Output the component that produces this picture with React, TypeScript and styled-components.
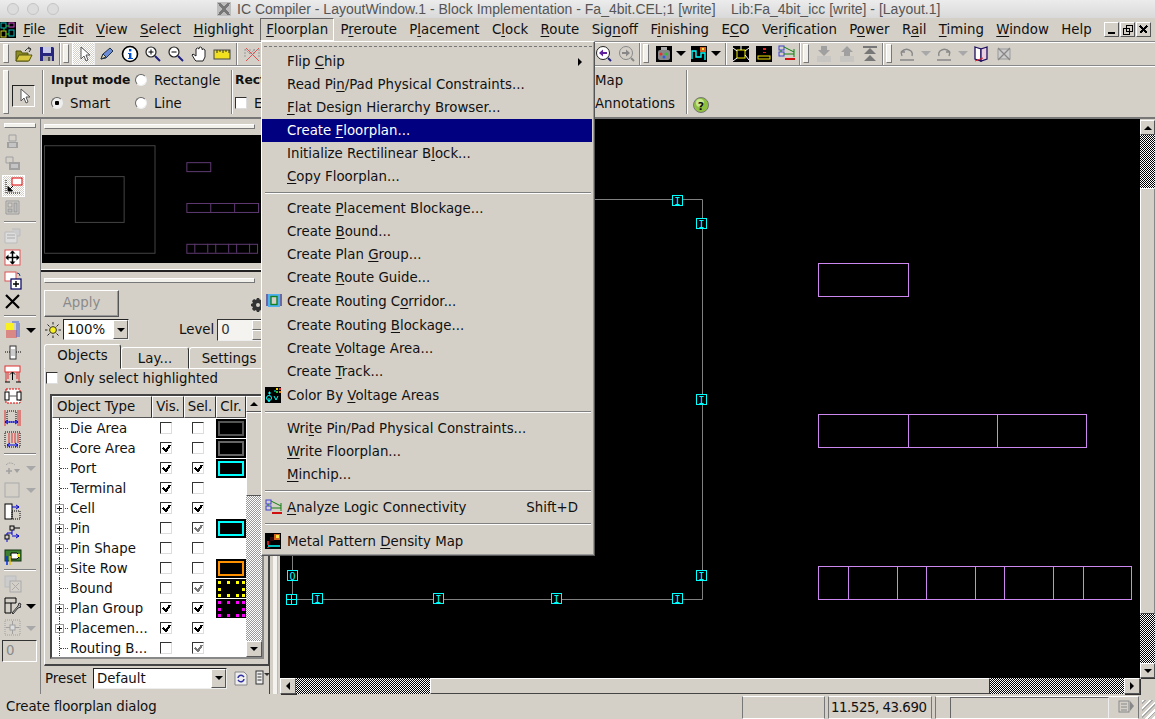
import React from "react";
import styled, { createGlobalStyle, css } from "styled-components";

const FACE = "#d4d0c8";
const raised = css`
  border: 1px solid;
  border-color: #fff #555 #555 #fff;
`;
const sunken = css`
  border: 1px solid;
  border-color: #555 #fff #fff #555;
`;
const dither = css`
  background: repeating-conic-gradient(#000 0 25%, #fff 0 50%) 0 0 / 2px 2px;
`;

const Global = createGlobalStyle`
  html, body { margin: 0; padding: 0; width: 1155px; height: 719px; overflow: hidden; background: ${FACE}; }
  body { font-family: "DejaVu Sans", sans-serif; font-size: 13.33px; color: #111; }
  * { box-sizing: border-box; }
`;

const Shell = styled.div`
  position: relative;
  width: 1155px;
  height: 719px;
  display: flex;
  flex-direction: column;
  overflow: hidden;
`;

/* title bar */
const TitleBar = styled.div`
  height: 18px;
  flex: none;
  display: flex;
  align-items: center;
  background: linear-gradient(#ececec, #d9d9d9);
  padding-left: 7px;
`;
const Light = styled.span`
  width: 12px;
  height: 12px;
  border-radius: 50%;
  border: 1px solid #c4c4c4;
  background: #dcdcdc;
  margin-right: 8px;
`;
const TitleGlyph = styled.span`
  margin: 0 6px 0 150px;
  width: 14px;
  height: 14px;
  display: flex;
  background: #bdbdbd;
`;
const TitleText = styled.span`
  font-family: "Liberation Sans", sans-serif;
  font-size: 14px;
  color: #555;
  white-space: pre;
`;

/* menu bar */
const MenuBar = styled.div`
  height: 23px;
  flex: none;
  display: flex;
  align-items: center;
  background: ${FACE};
`;
const AppLogo = styled.span`
  width: 16px;
  height: 18px;
  margin-right: 1px;
  display: flex;
`;
const MenuEntry = styled.span<{ $open?: boolean }>`
  height: 23px;
  line-height: 21px;
  padding: 0 5.2px;
  white-space: nowrap;
  border: 1px solid transparent;
  ${(p) => p.$open && css`
    border-color: #666 #fff #fff #666;
  `}
`;
const Mn = styled.span`
  text-decoration: underline;
  text-underline-offset: 2px;
`;
const WinButtons = styled.div`
  margin-left: auto;
  margin-right: 4px;
  display: flex;
  gap: 1px;
`;
const WinButton = styled.span`
  ${raised}
  width: 15px;
  height: 15px;
  display: flex;
  align-items: center;
  justify-content: center;
`;

/* tool row */
const ToolRow = styled.div`
  height: 25px;
  flex: none;
  display: flex;
  align-items: center;
  padding-left: 1px;
  border-top: 1px solid #888;
  border-bottom: 1px solid #888;
  box-shadow: inset 0 1px 0 #fff;
`;
const Grip = styled.span<{ $tall?: boolean }>`
  flex: none;
  width: 6px;
  height: ${(p) => (p.$tall ? 44 : 19)}px;
  margin: 0 3px 0 2px;
  border: 1px solid #777;
  border-left-color: #fff;
  border-top-color: #fff;
  background: #f2f0ea;
`;
const ToolSep = styled.span<{ $inner?: boolean }>`
  flex: none;
  width: 2px;
  height: 22px;
  border-left: 1px solid #808080;
  border-right: 1px solid #fff;
  margin: ${(p) => (p.$inner ? "0 2px 0 3px" : "0 0 0 1px")};
`;
const ToolSlot = styled.span<{ $active?: boolean }>`
  flex: none;
  width: 23px;
  height: 23px;
  display: flex;
  align-items: center;
  justify-content: center;
  ${(p) => p.$active && css`
    ${raised}
    border-color: #fff #eee #eee #fff;
    background: repeating-conic-gradient(${FACE} 0 25%, #fff 0 50%) 0 0 / 2px 2px;
  `}
`;
const Caret = styled.span<{ $dim?: boolean; $lead?: number }>`
  flex: none;
  width: 0;
  height: 0;
  margin: 0 1px 0 ${(p) => p.$lead ?? 1}px;
  border-left: 5px solid transparent;
  border-right: 5px solid transparent;
  border-top: 5px solid ${(p) => (p.$dim ? "#a8a8a8" : "#000")};
`;
const Spacer = styled.span<{ $w?: number }>`
  flex: ${(p) => (p.$w ? "none" : "1")};
  ${(p) => p.$w && `width:${p.$w}px;`}
`;

/* mode bar */
const ModeBar = styled.div`
  height: 53px;
  flex: none;
  display: flex;
  align-items: center;
  padding-left: 1px;
  border-bottom: 2px solid #777;
  box-shadow: inset 0 1px 0 #fff;
`;
const ModeBox = styled.span`
  flex: none;
  width: 23px;
  height: 22px;
  margin-top: 8px;
  border: 1px solid;
  border-color: #222 #fff #fff #222;
  display: flex;
  align-items: center;
  justify-content: center;
`;
const ModeSep = styled.span<{ $m?: string }>`
  flex: none;
  width: 2px;
  height: 44px;
  border-left: 1px solid #808080;
  border-right: 1px solid #fff;
  margin: ${(p) => p.$m ?? "0 7px 0 7px"};
`;
const ModeGrid = styled.div`
  display: grid;
  grid-template-columns: 84px 87px;
  grid-auto-rows: 23px;
  align-items: center;
  white-space: nowrap;
`;
const Bold = styled.span`
  font-weight: 700;
  font-size: 12.3px;
`;
const RadioWrap = styled.span`
  display: flex;
  align-items: center;
  gap: 7px;
`;
const Radio = styled.span<{ $on?: boolean }>`
  width: 12px;
  height: 12px;
  border-radius: 50%;
  background: ${(p) => (p.$on ? "radial-gradient(circle, #000 0 2px, #eee 2.5px)" : "#fff")};
  border: 1px solid;
  border-color: #666 #eee #eee #666;
  flex: none;
`;
const RectCol = styled.div`
  display: grid;
  grid-auto-rows: 23px;
  align-items: center;
  margin-left: 0;
`;
const MapCol = styled.div`
  display: grid;
  grid-auto-rows: 23px;
  align-items: center;
  width: 91px;
`;
const HelpWrap = styled.span`
  flex: none;
  display: flex;
  margin-top: 26px;
`;

/* workspace */
const Workspace = styled.div`
  flex: 1;
  min-height: 0;
  display: flex;
`;
const SideBar = styled.div`
  flex: none;
  width: 41px;
  border-right: 1px solid #808080;
  display: flex;
  flex-direction: column;
  padding: 4px 0 0 4px;
`;
const SideGrip = styled.span`
  width: 32px;
  height: 5px;
  border: 1px solid #777;
  border-left-color: #fff;
  border-top-color: #fff;
  background: #f2f0ea;
  margin-bottom: 3px;
`;
const SideSlot = styled.span<{ $active?: boolean }>`
  height: 22px;
  display: flex;
  align-items: center;
  gap: 3px;
  ${(p) => p.$active && css`
    width: 23px;
    margin-left: -2px;
    padding-left: 2px;
    border: 1px solid #fff;
    background: repeating-conic-gradient(${FACE} 0 25%, #fff 0 50%) 0 0 / 2px 2px;
  `}
`;
const SideSep = styled.span`
  height: 6px;
  width: 32px;
  display: flex;
  align-items: center;
  &::before {
    content: "";
    width: 100%;
    border-top: 1px solid #808080;
    border-bottom: 1px solid #fff;
  }
`;
const SideField = styled.span`
  ${sunken}
  border-color: #333 #fff #fff #333;
  width: 35px;
  height: 22px;
  margin: 1px 0 0 -2px;
  padding-left: 3px;
  color: #8a8a8a;
  line-height: 20px;
`;

/* left panel */
const Panel = styled.div`
  flex: none;
  width: 229px;
  display: flex;
  flex-direction: column;
  padding-top: 5px;
  border-right: 1px solid #444;
  overflow: hidden;
`;
const PanelGrip = styled.span<{ $top?: number }>`
  flex: none;
  height: 5px;
  width: 211px;
  margin: ${(p) => p.$top ?? 0}px 0 0 3px;
  border: 1px solid #777;
  border-left-color: #fff;
  border-top-color: #fff;
  background: #f2f0ea;
`;
const MiniMap = styled.div`
  flex: none;
  height: 128px;
  margin: 6px 0 0 1px;
  background: #000;
  display: flex;
`;
const PanelDivider = styled.span`
  flex: none;
  height: 3px;
  margin-top: 6px;
  border-top: 1px solid #fff;
  border-bottom: 2px solid #222;
`;
const ApplyRow = styled.div`
  flex: none;
  height: 27px;
  margin: 7px 0 0 3px;
  display: flex;
  align-items: flex-start;
  justify-content: space-between;
`;
const ApplyButton = styled.span`
  ${raised}
  width: 75px;
  height: 27px;
  text-align: center;
  line-height: 24px;
  color: #8a8a8a;
  box-shadow: inset -1px -1px 0 #999;
`;
const GearWrap = styled.span`
  display: flex;
  margin: 7px 3px 0 0;
`;
const OptionRow = styled.div`
  flex: none;
  height: 23px;
  margin: 1px 0 0 4px;
  display: flex;
  align-items: center;
`;
const ComboBox = styled.span<{ $w: number }>`
  flex: none;
  width: ${(p) => p.$w}px;
  height: 21px;
  display: flex;
  align-items: center;
  justify-content: space-between;
  background: #fff;
  border: 1px solid;
  border-color: #222 #eee #eee #222;
  padding-left: 3px;
  margin-left: 2px;
`;
const ComboArrow = styled.span`
  ${raised}
  width: 15px;
  height: 19px;
  background: ${FACE};
  display: flex;
  align-items: center;
  justify-content: center;
`;
const SmallCaret = styled.span<{ $dir?: "up" | "down" | "left" | "right" }>`
  display: block;
  width: 0;
  height: 0;
  ${(p) => {
    switch (p.$dir) {
      case "up":
        return "border-left:4px solid transparent;border-right:4px solid transparent;border-bottom:4px solid #000;";
      case "left":
        return "border-top:4px solid transparent;border-bottom:4px solid transparent;border-right:4px solid #000;";
      case "right":
        return "border-top:4px solid transparent;border-bottom:4px solid transparent;border-left:4px solid #000;";
      default:
        return "border-left:4px solid transparent;border-right:4px solid transparent;border-top:4px solid #000;";
    }
  }}
`;
const LevelLabel = styled.span`
  margin: 0 3px 0 50px;
`;
const SpinField = styled.span`
  flex: none;
  width: 47px;
  height: 22px;
  background: #f4f3ef;
  border: 1px solid;
  border-color: #333 #eee #eee #333;
  padding-left: 3px;
  line-height: 20px;
  color: #333;
  display: flex;
  justify-content: space-between;
`;
const SpinButtons = styled.span`
  width: 11px;
  display: flex;
  flex-direction: column;
  margin-right: 0;
  &::before,
  &::after {
    content: "";
    flex: 1;
    background: ${FACE};
    border: 1px solid;
    border-color: #fff #666 #666 #fff;
  }
`;
const TabRow = styled.div`
  flex: none;
  height: 25px;
  margin: 3px 0 0 3px;
  display: flex;
  align-items: flex-end;
`;
const Tab = styled.span<{ $active?: boolean; $w: number }>`
  flex: none;
  width: ${(p) => p.$w}px;
  height: ${(p) => (p.$active ? 25 : 22)}px;
  border: 1px solid;
  border-color: #fff #333 transparent #fff;
  border-radius: 3px 3px 0 0;
  text-align: center;
  line-height: ${(p) => (p.$active ? 22 : 21)}px;
  ${(p) => !p.$active && "border-bottom-color:#fff;"}
`;
const TabPane = styled.div`
  flex: none;
  height: 297px;
  width: 226px;
  margin-left: 3px;
  border-right: 2px solid #444;
  border-bottom: 2px solid #444;
  border-left: 1px solid #fff;
  display: flex;
  flex-direction: column;
`;
const OnlyRow = styled.label`
  flex: none;
  height: 18px;
  display: flex;
  align-items: center;
  gap: 6px;
  padding-left: 1px;
`;
const CheckBox = styled.span`
  flex: none;
  width: 12px;
  height: 12px;
  background: #fff;
  border: 1px solid;
  border-color: #333 #ddd #ddd #333;
  display: flex;
  align-items: center;
  justify-content: center;
`;
const TableFrame = styled.div`
  flex: none;
  margin: 7px 0 0 5px;
  width: 214px;
  height: 265px;
  border: 2px solid;
  border-color: #444 #888 #888 #444;
  display: flex;
  overflow: hidden;
`;
const TableMain = styled.div`
  flex: 1;
  min-width: 0;
  background: #fff;
`;
const HeadRow = styled.div`
  height: 22px;
  display: grid;
  grid-template-columns: 100px 32px 32px 30px;
  background: ${FACE};
`;
const HeadCell = styled.span<{ $center?: boolean }>`
  ${raised}
  border-right-color: #333;
  line-height: 20px;
  padding-left: ${(p) => (p.$center ? 0 : 4)}px;
  text-align: ${(p) => (p.$center ? "center" : "left")};
  overflow: hidden;
  white-space: nowrap;
`;
const DataRow = styled.div`
  height: 20px;
  display: grid;
  grid-template-columns: 100px 32px 32px 30px;
  align-items: center;
`;
const NameCell = styled.span`
  height: 20px;
  display: flex;
  align-items: center;
  white-space: nowrap;
`;
const Branch = styled.span`
  position: relative;
  flex: none;
  width: 18px;
  height: 20px;
  &::before {
    content: "";
    position: absolute;
    left: 7px;
    top: 0;
    bottom: 0;
    border-left: 1px dotted #444;
  }
  &::after {
    content: "";
    position: absolute;
    left: 8px;
    top: 10px;
    width: 8px;
    border-top: 1px dotted #444;
  }
`;
const PlusBox = styled.span`
  position: absolute;
  z-index: 1;
  left: 3px;
  top: 6px;
  width: 9px;
  height: 9px;
  border: 1px solid #999;
  background: linear-gradient(#111, #111) center / 5px 1px no-repeat,
    linear-gradient(#111, #111) center / 1px 5px no-repeat, #fff;
`;
const BoxCell = styled.span`
  display: flex;
  justify-content: center;
  padding-right: 4px;
`;
const Swatch = styled.span<{ $c?: string }>`
  height: 19px;
  width: 30px;
  background: #000;
  border: 1px solid #000;
  ${(p) => p.$c && `box-shadow: inset 0 0 0 1px #000, inset 0 0 0 3px ${p.$c}, inset 0 0 0 20px #000;`}
  display: flex;
`;
const ThinScroll = styled.div`
  flex: none;
  width: 16px;
  display: flex;
  flex-direction: column;
  background: ${FACE};
`;
const ScrollBtn = styled.span<{ $s?: number }>`
  ${raised}
  flex: none;
  width: ${(p) => p.$s ?? 16}px;
  height: ${(p) => p.$s ?? 16}px;
  box-shadow: 1px 1px 0 #333;
  background: ${FACE};
  display: flex;
  align-items: center;
  justify-content: center;
`;
const Thumb = styled.span<{ $len?: number }>`
  ${raised}
  flex: ${(p) => (p.$len ? `none` : "1")};
  ${(p) => p.$len && `height:${p.$len}px;`}
  background: ${FACE};
`;
const DitherFill = styled.span`
  flex: 1;
  background: repeating-conic-gradient(#999 0 25%, #fff 0 50%) 0 0 / 2px 2px;
`;
const PresetRow = styled.div`
  flex: none;
  height: 22px;
  margin: 1px 0 0 4px;
  display: flex;
  align-items: center;
`;
const PresetLabel = styled.span`
  width: 46px;
  flex: none;
`;
const PresetIcons = styled.span`
  display: flex;
  align-items: center;
  gap: 6px;
  margin-left: 6px;
`;

/* sash */
const Sash = styled.div`
  flex: none;
  width: 10px;
  display: flex;
  justify-content: center;
  &::before {
    content: "";
    width: 4px;
    background: #f4f3ef;
    border-right: 1px solid #bbb;
  }
`;

/* canvas */
const CanvasGrid = styled.div`
  flex: 1;
  min-width: 0;
  display: grid;
  grid-template-columns: 1fr 15px;
  grid-template-rows: 1fr 16px;
`;
const CanvasArea = styled.div`
  background: #000;
  min-height: 0;
  overflow: hidden;
  display: flex;
`;
const VScroll = styled.div`
  display: flex;
  flex-direction: column;
  padding-top: 1px;
`;
const VDither = styled.span<{ $len: number }>`
  flex: none;
  height: ${(p) => p.$len}px;
  ${dither}
`;
const VThumb = styled.span`
  ${raised}
  flex: 1;
  background: ${FACE};
  border-right-color: #888;
  border-bottom-color: #444;
`;
const HScroll = styled.div`
  display: flex;
`;
const HDither = styled.span`
  flex: none;
  width: 134px;
  ${dither}
`;
const HThumb = styled.span`
  ${raised}
  flex: 1;
  background: ${FACE};
  border-bottom-color: #444;
  border-right-color: #333;
`;

/* status bar */
const StatusBar = styled.div`
  height: 25px;
  flex: none;
  display: flex;
  align-items: center;
  position: relative;
`;
const StatusText = styled.span`
  padding-left: 6px;
  width: 742px;
  flex: none;
  letter-spacing: -0.08px;
`;
const StatusCell = styled.span<{ $w: number }>`
  flex: none;
  width: ${(p) => p.$w}px;
  height: 23px;
  margin-right: 3px;
  margin-top: 2px;
  padding-left: 2px;
  line-height: 21px;
  white-space: nowrap;
  letter-spacing: -0.45px;
  border: 1px solid;
  border-color: #fff #777 #fff #777;
  display: flex;
  align-items: center;
`;
const StatusInner = styled.span`
  flex: 1;
  height: 21px;
  margin-left: 12px;
  border-left: 1px solid #666;
  border-top: 1px solid #666;
  border-right: 1px solid #eee;
`;
const StatusIconWrap = styled.span`
  display: flex;
  padding: 0 2px 0 9px;
`;
const ResizeGrip = styled.span`
  margin-left: auto;
  width: 15px;
  height: 19px;
  align-self: flex-end;
  background: repeating-linear-gradient(135deg, #fff 0 2px, #aaa 2px 3px, ${FACE} 3px 5px);
`;

/* popup */
const Popup = styled.div`
  position: absolute;
  z-index: 5;
  left: 261px;
  top: 41px;
  width: 334px;
  height: 515px;
  background: ${FACE};
  border: 1px solid;
  border-color: #fff #555 #555 #fff;
  box-shadow: inset -1px -1px 0 #999;
  display: flex;
  flex-direction: column;
`;
const TearOff = styled.div`
  flex: none;
  height: 8px;
  margin: 0 2px;
  display: flex;
  align-items: center;
  &::before {
    content: "";
    width: 100%;
    border-top: 1px dashed #777;
  }
`;
const PopItem = styled.div<{ $sel?: boolean; $tall?: boolean }>`
  flex: none;
  height: ${(p) => (p.$tall ? 24 : 23)}px;
  margin-right: 2px;
  display: flex;
  align-items: center;
  white-space: nowrap;
  ${(p) => p.$sel && `background:#000080;color:#fff;`}
`;
const PopIcon = styled.span`
  flex: none;
  width: 25px;
  padding-left: 3px;
  display: flex;
  align-items: center;
`;
const PopShort = styled.span`
  margin-left: auto;
  margin-right: 14px;
`;
const PopArrow = styled.span`
  margin-left: auto;
  margin-right: 10px;
  display: flex;
`;
const PopSep = styled.div<{ $h?: number }>`
  flex: none;
  height: ${(p) => p.$h ?? 9}px;
  margin: 0 3px;
  display: flex;
  align-items: center;
  &::before {
    content: "";
    width: 100%;
    border-top: 1px solid #808080;
    border-bottom: 1px solid #fff;
  }
`;
const Glyph = styled.svg`
  display: block;
  flex: none;
`;
const PixelGlyph = styled.svg`
  display: block;
  flex: none;
  shape-rendering: crispEdges;
`;

const Label = ({ t }: { t: string }) => {
  const i = t.indexOf("_");
  if (i < 0) return <span>{t}</span>;
  return (
    <span>
      {t.slice(0, i)}
      <Mn>{t[i + 1]}</Mn>
      {t.slice(i + 2)}
    </span>
  );
};

const D = "#a0a0a0";
const ICONS: Record<string, React.ReactNode> = {
  open: (
    <>
      <path d="M1 16V6h5l1 2h6v8z" fill="#8a8a20" stroke="#555510" />
      <path d="M1 16l3-6h13l-3 6z" fill="#d8c840" stroke="#555510" />
      <path d="M10 6q2-4 6-2M16 4l-3-2M16 4l-2 3" stroke="#333" fill="none" />
    </>
  ),
  save: (
    <>
      <path d="M2 2h13l1 1v13H2z" fill="#26267e" />
      <rect x="5" y="2" width="8" height="6" fill="#c8c8e8" />
      <rect x="5" y="11" width="9" height="5" fill="#aaa" />
      <rect x="10" y="12" width="2" height="4" fill="#555" />
    </>
  ),
  arrow: <path d="M6 2v12l3-3 2 5 2-1-2-5h4z" fill="#fff" stroke="#555" />,
  pencil: (
    <>
      <path d="M3 14l2-5 7-6 3 3-7 7z" fill="#6c8cd8" stroke="#234" />
      <path d="M3 14l2-5 3 3z" fill="#e8d8b0" stroke="#234" />
    </>
  ),
  info: (
    <>
      <circle cx="9" cy="9" r="7.5" fill="#fff" stroke="#000" strokeWidth="1.6" />
      <rect x="8" y="4" width="2.4" height="2.4" fill="#0050d0" />
      <path d="M7 8h3.4v5H12v1H7v-1h1V9H7z" fill="#0050d0" />
    </>
  ),
  zoomin: (
    <>
      <circle cx="7" cy="7" r="5" fill="#fff" stroke="#222" strokeWidth="1.2" />
      <path d="M4.5 7h5M7 4.5v5" stroke="#000" />
      <path d="M11 11l5 5" stroke="#202080" strokeWidth="2" />
    </>
  ),
  zoomout: (
    <>
      <circle cx="7" cy="7" r="5" fill="#fff" stroke="#222" strokeWidth="1.2" />
      <path d="M4.5 7h5" stroke="#000" />
      <path d="M11 11l5 5" stroke="#202080" strokeWidth="2" />
    </>
  ),
  hand: (
    <path
      d="M5 15L2 10l1-1 3 2V4l1.500-1L9 4V2.500L10.500 2 12 3v1.500L13.500 4 15 5v7l-2 4H6z"
      fill="#fff"
      stroke="#222"
    />
  ),
  ruler: (
    <>
      <rect x="1" y="5" width="16" height="9" fill="#f0e020" stroke="#444" />
      <path d="M4 5v3M7 5v2M10 5v3M13 5v2M16 5v3" stroke="#333" />
    </>
  ),
  crossed: (
    <>
      <path d="M2 4v9M16 4v9M2 4l5 5 5-5M7 4v5M11 4v5" stroke="#999" fill="none" strokeDasharray="2 1" />
      <path d="M3 3l13 13M16 3L3 16" stroke="#e05050" />
    </>
  ),
  zoomback: (
    <>
      <circle cx="8" cy="8" r="6.500" fill="#fff" stroke="#222" />
      <path d="M4 8l4-3.500V7h4v2H8v2.500z" fill="#6020a0" />
      <path d="M13 13l3 3" stroke="#202080" strokeWidth="2" />
    </>
  ),
  zoomfwd: (
    <>
      <circle cx="8" cy="8" r="6.500" fill={FACE} stroke="#888" />
      <path d="M12 8L8 4.500V7H4v2h4v2.500z" fill="#888" />
      <path d="M13 13l3 3" stroke="#888" strokeWidth="2" />
    </>
  ),
  camera: (
    <>
      <rect x="1" y="1" width="16" height="16" fill="#000" />
      <rect x="3" y="5" width="12" height="10" rx="2" fill="#888" />
      <rect x="6" y="2" width="6" height="3" fill="#aaa" />
      <circle cx="6" cy="9" r="1.500" fill="#e03030" />
      <circle cx="11" cy="9" r="1.500" fill="#30c030" />
      <circle cx="9" cy="12" r="1.500" fill="#3060e0" />
    </>
  ),
  routemap: (
    <>
      <rect x="1" y="1" width="16" height="16" fill="#000" />
      <path d="M2 14V6h4v6h5v-4h4v7" stroke="#00ffff" fill="none" strokeWidth="1.4" />
      <rect x="10" y="2" width="6" height="5" fill="#d06020" />
      <rect x="12" y="3" width="2" height="2" fill="#ffe040" />
    </>
  ),
  yellownet: (
    <>
      <rect x="1" y="1" width="16" height="16" fill="#000" />
      <rect x="5" y="5" width="8" height="8" fill="none" stroke="#f0f000" />
      <path d="M1 3l4 3M17 3l-4 3M1 16l4-3M13 10l4 5M9 1v4" stroke="#fff" />
    </>
  ),
  redbox: (
    <>
      <rect x="1" y="1" width="16" height="16" fill="#000" />
      <path d="M8 3h3v2H8zM8 7h3v1H8z" fill="#e02020" />
      <rect x="3" y="11" width="12" height="3" fill="none" stroke="#f0e000" />
    </>
  ),
  logic: (
    <>
      <rect x="1" y="1" width="5" height="4" fill={FACE} stroke="#4040d0" />
      <rect x="1" y="7" width="5" height="4" fill={FACE} stroke="#4040d0" />
      <path d="M6 2l10 5M6 9h10M16 4v8M3 5v2" stroke="#108010" fill="none" />
      <rect x="7" y="13" width="10" height="2" fill="#d01010" />
    </>
  ),
  down: (
    <>
      <path d="M6 1h6v4h3l-6 6-6-6h3z" fill={D} />
      <path d="M2 12h14M2 14h14M2 16h14" stroke="#bbb" />
    </>
  ),
  up: (
    <>
      <path d="M9 1l6 6h-3v4H6V7H3z" fill={D} />
      <path d="M2 12h14M2 14h14M2 16h14" stroke="#bbb" />
    </>
  ),
  top: (
    <>
      <path d="M2 1h14v2H2z" fill="#777" />
      <path d="M9 3l6 6H3z" fill="#777" />
      <path d="M3 9h12l-6 0zM3 16l6-6 6 6z" fill="#777" />
    </>
  ),
  undo: <path d="M3 7q5-5 10-1 2 2 1 5M3 7l1 4M3 7l4 0M2 15h14" stroke="#888" fill="none" strokeWidth="1.300" />,
  redo: <path d="M15 7q-5-5-10-1-2 2-1 5M15 7l-1 4M15 7l-4 0M2 15h14" stroke="#888" fill="none" strokeWidth="1.300" />,
  book: (
    <>
      <path d="M3 2l6 2v12l-6-2z" fill="#fff" stroke="#201060" strokeWidth="1.300" />
      <path d="M15 2l-6 2v12l6-2z" fill="#e8d0e0" stroke="#201060" strokeWidth="1.300" />
      <path d="M3 16l8-3" stroke="#e02020" />
    </>
  ),
  crossbook: (
    <>
      <path d="M3 4h12v10H3z" fill="#ccc" stroke="#999" />
      <path d="M3 3l12 12M15 3L3 15" stroke="#888" strokeWidth="1.400" />
    </>
  ),
  printer: (
    <>
      <path d="M5 2h7v6H5z" fill="none" stroke={D} />
      <path d="M3 9h11v6H3z" fill={D} />
      <path d="M5 11h7M5 13h7" stroke="#e8e8e8" />
    </>
  ),
  copyp: (
    <>
      <path d="M2 2h7v6H2z" fill="none" stroke={D} />
      <path d="M5 7h11v8H5z" fill={D} />
      <path d="M7 10h7M7 12h7" stroke="#e8e8e8" />
    </>
  ),
  place: (
    <>
      <rect x="7" y="1" width="10" height="7" fill="#fff" stroke="#e00000" />
      <path d="M1 3v13h15" stroke="#000" strokeDasharray="1 1" fill="none" />
      <path d="M3 14l5-5M3 9.500V14h4.500z" stroke="#000" fill="#000" />
    </>
  ),
  grid: (
    <>
      <path d="M2 2h13v13H2z" fill="none" stroke="#999" />
      <rect x="4" y="4" width="4" height="4" fill="none" stroke="#999" />
      <rect x="4" y="10" width="4" height="3" fill="#bbb" stroke="#999" />
      <rect x="10" y="4" width="3" height="9" fill="#bbb" stroke="#999" />
    </>
  ),
  docs: (
    <>
      <path d="M1 5h12v11H1z" fill="#ddd" stroke="#bbb" />
      <path d="M8 2h8v7h-3" fill="#ccc" stroke="#bbb" />
      <path d="M3 8h8M3 11h8" stroke="#aaa" />
    </>
  ),
  move: (
    <>
      <rect x="1" y="1" width="15" height="15" fill="#fff" stroke="#e05050" />
      <path d="M8.500 2v13M2 8.500h13" stroke="#000" strokeWidth="1.500" />
      <path d="M8.500 1.500l3 3h-6zM8.500 15.500l3-3h-6zM1.500 8.500l3-3v6zM15.500 8.500l-3-3v6z" fill="#000" />
    </>
  ),
  copyadd: (
    <>
      <rect x="1" y="1" width="11" height="9" fill="#fff" stroke="#e05050" />
      <rect x="7" y="8" width="10" height="10" fill="#fff" stroke="#000060" strokeWidth="1.200" />
      <path d="M12 10v6M9 13h6" stroke="#000" strokeWidth="1.400" />
      <path d="M13 2q3 0 3 3" stroke="#204080" fill="none" />
    </>
  ),
  cross: <path d="M2 2l13 13M15 2L2 15" stroke="#000" strokeWidth="2.200" />,
  layers: (
    <>
      <path d="M2 10h11M2 12h11M2 14h11M2 16h11" stroke="#e04040" />
      <path d="M13 2v14M15 2v14" stroke="#4060d0" />
      <rect x="2" y="2" width="8" height="7" fill="#f8f020" />
      <path d="M15 1H8" stroke="#4060d0" />
    </>
  ),
  slider: (
    <>
      <path d="M1 9h5M12 9h5" stroke="#000" strokeDasharray="1 1" />
      <rect x="6" y="3" width="6" height="13" fill="#fff" stroke="#333" />
      <rect x="7" y="6" width="4" height="7" fill="#ccc" />
    </>
  ),
  pull: (
    <>
      <rect x="1" y="1" width="15" height="6" fill="#fff" stroke="#e03030" />
      <path d="M2 7v10M15 7v10M4 7v7M13 7v7" stroke="#e03030" />
      <path d="M1 17h5M12 17h5" stroke="#000" />
      <path d="M8.500 15V7M6 9.500L8.500 7 11 9.500" stroke="#000" fill="none" />
    </>
  ),
  stretch: (
    <>
      <rect x="2" y="2" width="14" height="14" fill="#fff" stroke="#e00000" strokeDasharray="2 1" />
      <rect x="1" y="5" width="4" height="8" fill="#fff" stroke="#000" />
      <rect x="13" y="5" width="4" height="8" fill="#fff" stroke="#000" />
      <path d="M5 9h8" stroke="#555" />
    </>
  ),
  rows: (
    <>
      <rect x="3" y="2" width="9" height="11" fill="none" stroke="#000" strokeDasharray="1 1" />
      <path d="M1 1v16M14 1v16M16 1v16" stroke="#e03030" />
      <path d="M1 13h13M1 13l3-2M1 13l3 2M14 13l-3-2M14 13l-3 2" stroke="#0000e0" fill="none" />
    </>
  ),
  rows2: (
    <>
      <rect x="1" y="1" width="15" height="15" fill="none" stroke="#000" strokeDasharray="1 1" />
      <path d="M5 2v10M8 2v10M11 2v10M14 2v10" stroke="#e03030" />
      <path d="M3 14h11M3 14l3-2M3 14l3 2M14 14l-3-2M14 14l-3 2" stroke="#0000e0" fill="none" />
    </>
  ),
  dimshape: (
    <>
      <path d="M2 6q4-4 9 0" stroke={D} fill="none" strokeDasharray="2 1" />
      <path d="M2 12h6M5 9v6" stroke={D} strokeWidth="1.500" />
      <path d="M10 10h6l-3 4z" fill={D} />
    </>
  ),
  dimbox: <rect x="1" y="2" width="14" height="14" fill={FACE} stroke="#aaa" />,
  boxdash: (
    <>
      <rect x="1" y="1" width="7" height="15" fill="#fff" stroke="#000" />
      <rect x="8" y="8" width="8" height="8" fill="none" stroke="#000" strokeDasharray="1 1" />
      <path d="M8 4h7M12 2l3 2-3 2M15 10" stroke="#0000d0" fill="none" />
    </>
  ),
  tree: (
    <>
      <rect x="6" y="1" width="4" height="4" fill="none" stroke="#000" />
      <path d="M10 3h6" stroke="#000" />
      <rect x="1" y="10" width="4" height="4" fill="none" stroke="#000" />
      <path d="M8 5v5M3 10V8h5M8 11h7M12 9l3 2-3 2M3 14v3" stroke="#0000d0" fill="none" />
    </>
  ),
  tagged: (
    <>
      <rect x="1" y="3" width="16" height="11" fill="#3c8030" stroke="#103010" />
      <path d="M7 6h6l3 3-3 3H7z" fill="#fff" stroke="#000" />
      <rect x="13" y="7" width="3" height="3" fill="#f0f000" />
      <path d="M3 9v9" stroke="#0030e0" strokeWidth="1.500" />
      <path d="M6 9v9" stroke="#e0c020" strokeWidth="1.500" />
    </>
  ),
  dimcopy: (
    <>
      <rect x="1" y="1" width="11" height="11" fill="#ccc" stroke="#bbb" />
      <rect x="6" y="6" width="11" height="11" fill={FACE} stroke="#aaa" />
      <path d="M8 8l7 7M15 8l-7 7" stroke="#aaa" />
    </>
  ),
  wrench: (
    <>
      <path d="M1 1h11v5H7v10H1z" fill="none" stroke="#000" />
      <path d="M1 6h6" stroke="#000" />
      <path d="M8 16l6-7 1-3 2 1-1 2 1 1-3 1-5 6z" fill="#bbb" stroke="#333" />
    </>
  ),
  dimnode: (
    <>
      <rect x="1" y="1" width="15" height="15" fill="none" stroke={D} strokeDasharray="1 1" />
      <rect x="6" y="6" width="5" height="5" fill="#ddd" stroke={D} />
      <path d="M8.500 2v4M8.500 11v4M2 8.500h4M11 8.500h4" stroke={D} />
    </>
  ),
  corridor: (
    <>
      <rect x="3" y="1" width="12" height="13" fill="#50b0f0" />
      <rect x="6" y="3.500" width="6" height="8" fill={FACE} stroke="#108020" strokeWidth="1.400" />
      <path d="M1 2h2M1 4h2M1 6h2M1 8h2M1 10h2M1 12h2" stroke="#000080" />
      <path d="M15 2h2M15 4h2M15 6h2M15 8h2M15 10h2M15 12h2" stroke="#000080" />
    </>
  ),
  voltage: (
    <>
      <rect x="0" y="0" width="16" height="16" fill="#000" />
      <path d="M3 6h3M4.500 4.500v3M9 4h2M3 14h2M4 11v4" stroke="#00ffff" />
      <circle cx="4" cy="11" r="2.500" fill="none" stroke="#00ffff" />
      <path d="M9 9l2 4 2-4" stroke="#00ffff" fill="none" />
      <rect x="11" y="1" width="2" height="2" fill="#f0d000" />
      <rect x="14" y="1" width="2" height="2" fill="#e03030" />
      <rect x="11" y="4" width="2" height="2" fill="#30c030" />
      <rect x="14" y="4" width="2" height="2" fill="#e08020" />
    </>
  ),
  density: (
    <>
      <rect x="0" y="0" width="16" height="16" fill="#000" />
      <rect x="9" y="1" width="6" height="6" fill="#d06020" />
      <rect x="11" y="2" width="3" height="3" fill="#ffe040" />
      <path d="M3 13h12" stroke="#00ffff" strokeWidth="1.500" />
      <path d="M3 8v4M3 14v1" stroke="#f02020" strokeWidth="1.600" />
      <path d="M5 5h4M5 7h4" stroke="#601010" />
    </>
  ),
  sun: (
    <>
      <circle cx="8" cy="8" r="3.400" fill="#f8f020" stroke="#333" />
      <path d="M8 0v2.500M8 13.500V16M0 8h2.500M13.500 8H16M2.500 2.500l2 2M11.500 11.500l2 2M2.500 13.500l2-2M11.500 4.500l2-2" stroke="#222" />
    </>
  ),
  gear: (
    <path
      d="M7 1h2l1 2 2-1 2 2-1 2 2 1v2l-2 1 1 2-2 2-2-1-1 2H7l-1-2-2 1-2-2 1-2-2-1V7l2-1-1-2 2-2 2 1zM8 6a2 2 0 100 4 2 2 0 000-4z"
      fill="#333"
      fillRule="evenodd"
    />
  ),
  refresh: (
    <>
      <path d="M2 2h9l3 3v10H2z" fill="#eee" stroke="#888" />
      <path d="M5 8a3 3 0 015-2l1 1M11 9a3 3 0 01-5 2l-1-1" stroke="#3030a0" fill="none" strokeWidth="1.500" />
    </>
  ),
  listdrop: (
    <>
      <rect x="1" y="1" width="7" height="13" fill="#eee" stroke="#333" />
      <path d="M2.500 4h4M2.500 7h4M2.500 10h4" stroke="#333" />
      <path d="M9 3h6l-3 3z" fill="#333" />
    </>
  ),
  listdim: (
    <>
      <rect x="1" y="2" width="10" height="11" fill={FACE} stroke="#888" />
      <path d="M3 5h6M3 8h6M3 11h6" stroke="#888" />
      <path d="M12 2l4 5-4 5z" fill="#888" />
    </>
  ),
  help: (
    <>
      <circle cx="8" cy="8" r="7.500" fill="#90c040" stroke="#777" />
      <circle cx="7" cy="6" r="4" fill="#c8e890" />
    </>
  ),
  logo: (
    <>
      <rect x="0" y="1" width="16" height="16" fill="#000" />
      <rect x="1" y="2" width="5" height="5" fill="none" stroke="#00c0c0" />
      <rect x="9" y="2" width="5" height="4" fill="none" stroke="#d040d0" />
      <rect x="1" y="10" width="5" height="6" fill="none" stroke="#d0d020" />
      <rect x="9" y="9" width="5" height="6" fill="none" stroke="#00c0c0" />
      <path d="M6 5h3M4 7v3M6 13h3" stroke="#30c030" />
    </>
  ),
};

const Icon = ({ n, s = 18 }: { n: string; s?: number }) => (
  <Glyph width={s} height={s} viewBox={`0 0 ${s} ${s}`} overflow="visible">
    {ICONS[n]}
  </Glyph>
);

const Check = ({ dim }: { dim?: boolean }) => (
  <PixelGlyph width="9" height="9" viewBox="0 0 9 9">
    <path d="M1 4l3 3 4-6" stroke={dim ? "#777" : "#000"} strokeWidth="2" fill="none" />
  </PixelGlyph>
);

const Dots = ({ color }: { color: string }) => (
  <PixelGlyph width="28" height="17" viewBox="0 0 28 17">
    {[2, 11, 20, 26].map((x) => (
      <rect key={`t${x}`} x={x - 1} y="1" width="3" height="3" fill={color} />
    ))}
    {[2, 11, 20, 26].map((x) => (
      <rect key={`b${x}`} x={x - 1} y="14" width="3" height="3" fill={color} />
    ))}
    <rect x="1" y="8" width="3" height="3" fill={color} />
    <rect x="25" y="8" width="3" height="3" fill={color} />
  </PixelGlyph>
);

const MENUS = [
  "_File", "_Edit", "_View", "_Select", "_Highlight", "_Floorplan", "P_reroute", "P_lacement", "C_lock",
  "_Route", "Sig_noff", "F_inishing", "E_CO", "Ver_ification", "P_ower", "R_ail", "_Timing", "_Window", "Help",
];

type ObjRow = {
  name: string; plus?: boolean; vis?: number; sel?: number; sw?: string; dots?: string;
};
const ROWS: ObjRow[] = [
  { name: "Die Area", sw: "#555" },
  { name: "Core Area", vis: 1, sw: "#666" },
  { name: "Port", vis: 1, sel: 1, sw: "#00ffff" },
  { name: "Terminal", vis: 1 },
  { name: "Cell", plus: true, vis: 1, sel: 1 },
  { name: "Pin", plus: true, sel: 2, sw: "#00ffff" },
  { name: "Pin Shape", plus: true },
  { name: "Site Row", plus: true, sw: "#ff9000" },
  { name: "Bound", sel: 2, dots: "#ffff00" },
  { name: "Plan Group", plus: true, vis: 1, sel: 1, dots: "#ff00ff" },
  { name: "Placemen...", plus: true, vis: 1, sel: 1 },
  { name: "Routing B...", sel: 2 },
];

type Entry =
  | { sep: true; h?: number }
  | { t: string; sel?: boolean; tall?: boolean; icon?: string; short?: string; arrow?: boolean };
const POPUP: Entry[] = [
  { t: "Flip _Chip", arrow: true },
  { t: "Read Pi_n/Pad Physical Constraints..." },
  { t: "_Flat Design Hierarchy Browser..." },
  { t: "Create _Floorplan...", sel: true },
  { t: "Initialize Rectilinear B_lock..." },
  { t: "_Copy Floorplan..." },
  { sep: true },
  { t: "Create _Placement Blockage..." },
  { t: "Create _Bound..." },
  { t: "Create Plan _Group..." },
  { t: "Create _Route Guide..." },
  { t: "Create Routing C_orridor...", tall: true, icon: "corridor" },
  { t: "Create Routing _Blockage...", tall: true },
  { t: "Create _Voltage Area..." },
  { t: "Create _Track..." },
  { t: "Color By _Voltage Areas", tall: true, icon: "voltage" },
  { sep: true, h: 10 },
  { t: "Wri_te Pin/Pad Physical Constraints..." },
  { t: "_Write Floorplan..." },
  { t: "_Minchip..." },
  { sep: true },
  { t: "_Analyze Logic Connectivity", tall: true, icon: "logic", short: "Shift+D" },
  { sep: true, h: 10 },
  { t: "Metal Pattern _Density Map", tall: true, icon: "density" },
];

const SIDE: ({ n: string; caret?: "on" | "dim"; active?: boolean } | "sep")[] = [
  { n: "printer" }, { n: "copyp" }, { n: "place", active: true }, { n: "grid" }, "sep",
  { n: "docs" }, { n: "move" }, { n: "copyadd" }, { n: "cross" }, "sep",
  { n: "layers", caret: "on" }, { n: "slider" }, { n: "pull" }, { n: "stretch" }, { n: "rows" }, { n: "rows2" }, "sep",
  { n: "dimshape", caret: "dim" }, { n: "dimbox", caret: "dim" }, { n: "boxdash" }, { n: "tree" }, { n: "tagged" }, "sep",
  { n: "dimcopy" }, { n: "wrench", caret: "on" }, { n: "dimnode", caret: "dim" },
];

const PIN = "#00ffff";
const Pin = ({ x, y, c = "I" }: { x: number; y: number; c?: string }) => (
  <g>
    <rect x={x - 5.5} y={y - 5.5} width="10" height="10" fill="#000" stroke={PIN} />
    {c === "+" ? (
      <path d={`M${x - 5.5} ${y - 0.5}h10M${x - 0.5} ${y - 5.5}v10`} stroke={PIN} />
    ) : (
      <text x={x - 0.5} y={y + 3.5} fill={PIN} fontSize="10" fontFamily="'DejaVu Sans Mono', monospace" textAnchor="middle">
        {c}
      </text>
    )}
  </g>
);
const CELL = "#cc88ee";
const CellStrip = ({ y, xs }: { y: number; xs: number[] }) => (
  <g stroke={CELL} fill="none">
    <rect x={xs[0] + 0.5} y={y + 0.5} width={xs[xs.length - 1] - xs[0]} height="33" />
    {xs.slice(1, -1).map((x) => (
      <path key={x} d={`M${x + 0.5} ${y}v33`} />
    ))}
  </g>
);

const MINI = "#5f3a72";
const MiniStrip = ({ y, xs }: { y: number; xs: number[] }) => (
  <g stroke={MINI} fill="none">
    <rect x={xs[0] + 0.5} y={y + 0.5} width={xs[xs.length - 1] - xs[0]} height="9" />
    {xs.slice(1, -1).map((x) => (
      <path key={x} d={`M${x + 0.5} ${y}v9`} />
    ))}
  </g>
);

export default function App() {
  return (
    <Shell>
      <Global />
      <TitleBar>
        <Light />
        <Light />
        <Light />
        <TitleGlyph>
          <PixelGlyph width="14" height="14" viewBox="0 0 14 14">
            <path d="M2 1l10 12M12 1L2 13" stroke="#777" strokeWidth="2.500" />
          </PixelGlyph>
        </TitleGlyph>
        <TitleText>IC Compiler - LayoutWindow.1 - Block Implementation - Fa_4bit.CEL;1 [write]    Lib:Fa_4bit_icc [write] - [Layout.1]</TitleText>
      </TitleBar>

      <MenuBar>
        <AppLogo>
          <Icon n="logo" s={16} />
        </AppLogo>
        {MENUS.map((m) => (
          <MenuEntry key={m} $open={m === "_Floorplan"}>
            <Label t={m} />
          </MenuEntry>
        ))}
        <WinButtons>
          <WinButton>
            <PixelGlyph width="9" height="9" viewBox="0 0 9 9"><rect x="1" y="7" width="7" height="2" fill="#000" /></PixelGlyph>
          </WinButton>
          <WinButton>
            <PixelGlyph width="10" height="10" viewBox="0 0 10 10"><path d="M3.500.5h6v6h-6zM.5 3.500h6v6h-6z" fill={FACE} stroke="#000" /></PixelGlyph>
          </WinButton>
          <WinButton>
            <PixelGlyph width="9" height="9" viewBox="0 0 9 9"><path d="M1 1l7 7M8 1L1 8" stroke="#000" strokeWidth="1.600" /></PixelGlyph>
          </WinButton>
        </WinButtons>
      </MenuBar>

      <ToolRow>
        <Grip />
        <ToolSlot><Icon n="open" /></ToolSlot>
        <ToolSlot><Icon n="save" /></ToolSlot>
        <ToolSep />
        <Grip />
        <ToolSlot $active><Icon n="arrow" /></ToolSlot>
        <ToolSlot><Icon n="pencil" /></ToolSlot>
        <ToolSlot><Icon n="info" /></ToolSlot>
        <ToolSlot><Icon n="zoomin" /></ToolSlot>
        <ToolSlot><Icon n="zoomout" /></ToolSlot>
        <ToolSlot><Icon n="hand" /></ToolSlot>
        <ToolSlot><Icon n="ruler" /></ToolSlot>
        <ToolSep $inner />
        <ToolSlot><Icon n="crossed" /></ToolSlot>
        <Spacer />
        <ToolSlot><Icon n="zoomback" /></ToolSlot>
        <ToolSlot><Icon n="zoomfwd" /></ToolSlot>
        <ToolSep />
        <Grip />
        <ToolSlot><Icon n="camera" /></ToolSlot>
        <Caret />
        <ToolSlot><Icon n="routemap" /></ToolSlot>
        <Caret />
        <ToolSep $inner />
        <ToolSlot><Icon n="yellownet" /></ToolSlot>
        <ToolSlot><Icon n="redbox" /></ToolSlot>
        <ToolSlot><Icon n="logic" /></ToolSlot>
        <ToolSep />
        <Grip />
        <ToolSlot><Icon n="down" /></ToolSlot>
        <ToolSlot><Icon n="up" /></ToolSlot>
        <ToolSlot><Icon n="top" /></ToolSlot>
        <ToolSep />
        <Grip />
        <ToolSlot><Icon n="undo" /></ToolSlot>
        <Caret $dim $lead={3} />
        <ToolSlot><Icon n="redo" /></ToolSlot>
        <Caret $dim $lead={3} />
        <ToolSlot><Icon n="book" /></ToolSlot>
        <ToolSlot><Icon n="crossbook" /></ToolSlot>
        <Spacer $w={140} />
      </ToolRow>

      <ModeBar>
        <Grip $tall />
        <ModeBox><Icon n="arrow" /></ModeBox>
        <ModeSep />
        <ModeGrid>
          <Bold>Input mode</Bold>
          <RadioWrap><Radio />Rectangle</RadioWrap>
          <RadioWrap><Radio $on />Smart</RadioWrap>
          <RadioWrap><Radio />Line</RadioWrap>
        </ModeGrid>
        <ModeSep $m="0 2px 0 9px" />
        <RectCol>
          <Bold>Rect</Bold>
          <RadioWrap><CheckBox />E</RadioWrap>
        </RectCol>
        <Spacer />
        <MapCol>
          <span>Map</span>
          <span>Annotations</span>
        </MapCol>
        <ModeSep $m="0 5px 0 0" />
        <HelpWrap>
          <Glyph width="16" height="16" viewBox="0 0 16 16">
            {ICONS.help}
            <text x="8" y="12.500" fontSize="11" fontWeight="700" fontFamily="'DejaVu Sans', sans-serif" textAnchor="middle" fill="#111">?</text>
          </Glyph>
        </HelpWrap>
        <Spacer $w={446} />
      </ModeBar>

      <Workspace>
        <SideBar>
          <SideGrip />
          {SIDE.map((it, i) =>
            it === "sep" ? (
              <SideSep key={i} />
            ) : (
              <SideSlot key={i} $active={it.active}>
                <Icon n={it.n} />
                {it.caret && <Caret $dim={it.caret === "dim"} />}
              </SideSlot>
            )
          )}
          <SideField>0</SideField>
        </SideBar>

        <Panel>
          <PanelGrip />
          <MiniMap>
            <svg width="228" height="128" viewBox="42 135 228 128">
              <rect x="44.500" y="145.500" width="111" height="108" fill="none" stroke="#444" />
              <rect x="75.500" y="176.500" width="49" height="46" fill="none" stroke="#444" />
              <rect x="187.500" y="162.500" width="24" height="9" fill="none" stroke={MINI} />
              <MiniStrip y={203} xs={[187, 211, 235, 259]} />
              <MiniStrip y={244} xs={[187, 195, 208, 216, 229, 237, 250, 258]} />
            </svg>
          </MiniMap>
          <PanelDivider />
          <PanelGrip $top={6} />
          <ApplyRow>
            <ApplyButton>Apply</ApplyButton>
            <GearWrap><Icon n="gear" s={16} /></GearWrap>
          </ApplyRow>
          <OptionRow>
            <Icon n="sun" s={16} />
            <ComboBox $w={66}>
              100%
              <ComboArrow><SmallCaret /></ComboArrow>
            </ComboBox>
            <LevelLabel>Level</LevelLabel>
            <SpinField>0<SpinButtons /></SpinField>
          </OptionRow>
          <TabRow>
            <Tab $active $w={77}>Objects</Tab>
            <Tab $w={68}>Lay...</Tab>
            <Tab $w={80}>Settings</Tab>
          </TabRow>
          <TabPane>
            <OnlyRow><CheckBox />Only select highlighted</OnlyRow>
            <TableFrame>
              <TableMain>
                <HeadRow>
                  <HeadCell>Object Type</HeadCell>
                  <HeadCell $center>Vis.</HeadCell>
                  <HeadCell $center>Sel.</HeadCell>
                  <HeadCell $center>Clr.</HeadCell>
                </HeadRow>
                {ROWS.map((r) => (
                  <DataRow key={r.name}>
                    <NameCell>
                      <Branch>{r.plus && <PlusBox />}</Branch>
                      {r.name}
                    </NameCell>
                    <BoxCell><CheckBox>{r.vis ? <Check /> : null}</CheckBox></BoxCell>
                    <BoxCell><CheckBox>{r.sel ? <Check dim={r.sel === 2} /> : null}</CheckBox></BoxCell>
                    {r.sw ? (
                      <Swatch $c={r.sw} />
                    ) : r.dots ? (
                      <Swatch><Dots color={r.dots} /></Swatch>
                    ) : (
                      <span />
                    )}
                  </DataRow>
                ))}
              </TableMain>
              <ThinScroll>
                <ScrollBtn><SmallCaret $dir="up" /></ScrollBtn>
                <Thumb $len={84} />
                <DitherFill />
                <ScrollBtn><SmallCaret /></ScrollBtn>
              </ThinScroll>
            </TableFrame>
          </TabPane>
          <PresetRow>
            <PresetLabel>Preset</PresetLabel>
            <ComboBox $w={134}>
              Default
              <ComboArrow><SmallCaret /></ComboArrow>
            </ComboBox>
            <PresetIcons>
              <Icon n="refresh" s={16} />
              <Icon n="listdrop" s={16} />
            </PresetIcons>
          </PresetRow>
        </Panel>

        <Sash />

        <CanvasGrid>
          <CanvasArea>
            <svg width="860" height="559" viewBox="280 119 860 559">
              <path d="M281 199.500H702.500V599.500H292.500V199" stroke="#808080" fill="none" />
              <CellStrip y={263} xs={[818, 908]} />
              <CellStrip y={414} xs={[818, 908, 997, 1086]} />
              <CellStrip y={566} xs={[818, 848, 897, 926, 975, 1004, 1053, 1083, 1131]} />
              <Pin x={678} y={201} />
              <Pin x={702} y={224} />
              <Pin x={702} y={400} />
              <Pin x={702} y={576} />
              <Pin x={293} y={576} c="O" />
              <Pin x={292} y={600} c="+" />
              <Pin x={318} y={599} />
              <Pin x={439} y={599} />
              <Pin x={557} y={599} />
              <Pin x={678} y={599} />
            </svg>
          </CanvasArea>
          <VScroll>
            <ScrollBtn $s={15}><SmallCaret $dir="up" /></ScrollBtn>
            <VDither $len={53} />
            <VThumb />
            <VDither $len={49} />
            <ScrollBtn $s={15}><SmallCaret /></ScrollBtn>
          </VScroll>
          <HScroll>
            <ScrollBtn $s={16}><SmallCaret $dir="left" /></ScrollBtn>
            <HDither />
            <HThumb />
            <HDither />
            <ScrollBtn $s={16}><SmallCaret $dir="right" /></ScrollBtn>
          </HScroll>
          <span />
        </CanvasGrid>
      </Workspace>

      <StatusBar>
        <StatusText>Create floorplan dialog</StatusText>
        <StatusCell $w={83} />
        <StatusCell $w={104}>11.525, 43.690</StatusCell>
        <StatusCell $w={204}>
          <StatusInner />
          <StatusIconWrap><Icon n="listdim" s={18} /></StatusIconWrap>
        </StatusCell>
        <ResizeGrip />
      </StatusBar>

      <Popup>
        <TearOff />
        {POPUP.map((e, i) =>
          "sep" in e ? (
            <PopSep key={i} $h={e.h} />
          ) : (
            <PopItem key={i} $sel={e.sel} $tall={e.tall}>
              <PopIcon>{e.icon && <Icon n={e.icon} s={16} />}</PopIcon>
              <Label t={e.t} />
              {e.short && <PopShort>{e.short}</PopShort>}
              {e.arrow && <PopArrow><SmallCaret $dir="right" /></PopArrow>}
            </PopItem>
          )
        )}
      </Popup>
    </Shell>
  );
}
